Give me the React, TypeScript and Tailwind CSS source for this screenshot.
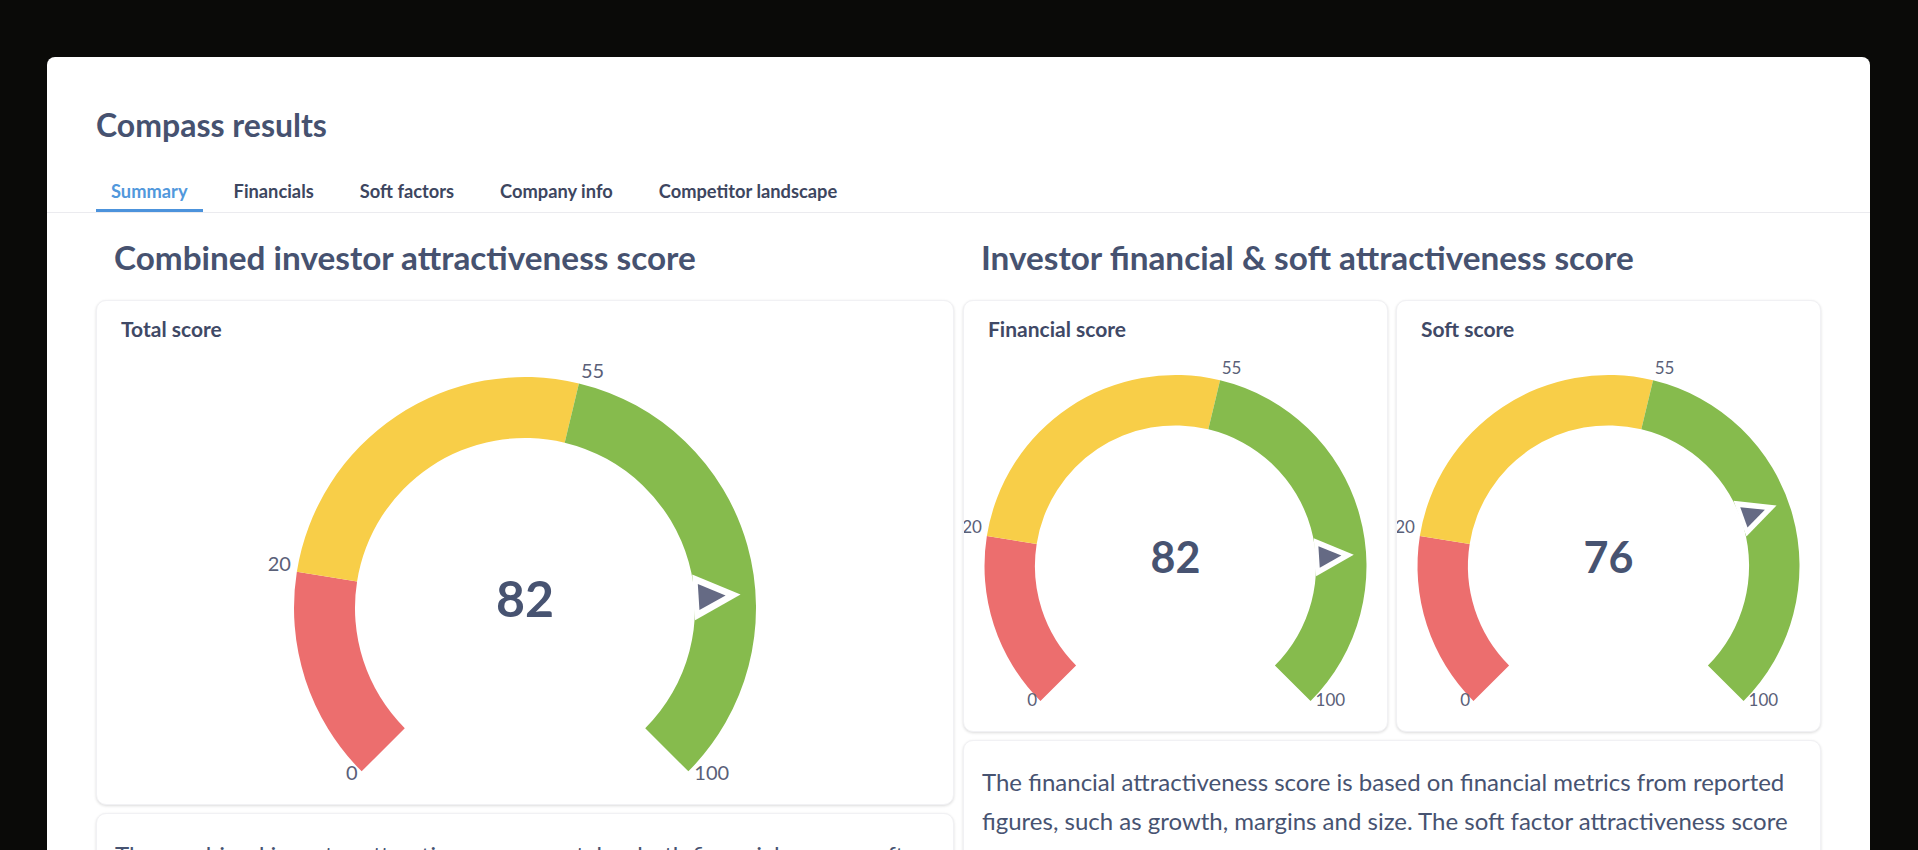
import React from "react"

const RED = "#ec6e6e"
const YELLOW = "#f8ce48"
const GREEN = "#86bb4d"

function angle(value: number) {
  return ((-135 + 2.7 * value) * Math.PI) / 180
}

function Gauge({
  value,
  R,
  width,
  height,
  cy,
  numSize,
  labelSize,
  labelLift,
}: {
  value: number
  R: number
  width: number
  height: number
  cy: number
  numSize: number
  labelSize: number
  labelLift: number
}) {
  const cx = width / 2
  const r = R * 0.736
  const s = R / 231

  const pt = (v: number, rad: number) => {
    const a = angle(v)
    return [cx + rad * Math.sin(a), cy - rad * Math.cos(a)]
  }

  const segment = (v1: number, v2: number) => {
    const [ox1, oy1] = pt(v1, R)
    const [ox2, oy2] = pt(v2, R)
    const [ix2, iy2] = pt(v2, r)
    const [ix1, iy1] = pt(v1, r)
    return `M ${ox1} ${oy1} A ${R} ${R} 0 0 1 ${ox2} ${oy2} L ${ix2} ${iy2} A ${r} ${r} 0 0 0 ${ix1} ${iy1} Z`
  }

  const tri = (base: number, tip: number, half: number) => {
    const a = angle(value)
    const ux = Math.sin(a)
    const uy = -Math.cos(a)
    const tx = Math.cos(a)
    const ty = Math.sin(a)
    const bx = cx + ux * base * s
    const by = cy + uy * base * s
    const p1 = [bx + tx * half * s, by + ty * half * s]
    const p2 = [bx - tx * half * s, by - ty * half * s]
    const p3 = [cx + ux * tip * s, cy + uy * tip * s]
    return [p1, p2, p3].map((p) => p.join(",")).join(" ")
  }

  const labels = [
    { v: 0, text: "0", anchor: "end", dx: -4, dy: 9 },
    { v: 20, text: "20", anchor: "end", dx: -6, dy: -1 },
    { v: 55, text: "55", anchor: "start", dx: 2, dy: -5 },
    { v: 100, text: "100", anchor: "start", dx: 6, dy: 9 },
  ]

  return (
    <svg width={width} height={height} className="block">
      <path d={segment(0, 20)} fill={RED} />
      <path d={segment(20, 55)} fill={YELLOW} />
      <path d={segment(55, 100)} fill={GREEN} />
      {labels.map((l) => {
        const [x, y] = pt(l.v, R)
        return (
          <text
            key={l.text}
            x={x + l.dx * s}
            y={y + l.dy * s - labelLift}
            textAnchor={l.anchor}
            fontSize={labelSize}
            fill="#5a6078"
          >
            {l.text}
          </text>
        )
      })}
      <polygon points={tri(169, 216, 23)} fill="#ffffff" />
      <polygon points={tri(174, 201, 13)} fill="#656a84" />
      <text
        x={cx}
        y={cy + 9 * s}
        textAnchor="middle"
        fontSize={numSize}
        fontWeight={700}
        fill="#475371"
      >
        {value}
      </text>
    </svg>
  )
}

function ScoreCard({
  title,
  children,
  className,
}: {
  title: string
  children: React.ReactNode
  className: string
}) {
  return (
    <div
      className={`rounded-[10px] border border-[#f1f1f4] bg-white shadow-[0_1px_3px_rgba(0,0,0,0.14)] ${className}`}
    >
      <div className="px-6 pt-4 text-[21px] leading-6 font-bold text-[#3f4966]">
        {title}
      </div>
      {children}
    </div>
  )
}

const tabs = [
  "Summary",
  "Financials",
  "Soft factors",
  "Company info",
  "Competitor landscape",
]

export default function App() {
  return (
    <div className="min-h-screen bg-[#0a0a08] pt-[57px] pl-[47px] pr-[48px] font-[family-name:Lato,sans-serif]">
      <div className="rounded-t-lg bg-white pb-10">
        <div className="border-b border-[#ebebef] px-[49px] pt-[50px]">
          <h1 className="text-[32px] leading-9 font-bold text-[#465270]">
            Compass results
          </h1>
          <div className="mt-9 flex gap-4">
            {tabs.map((tab, i) => (
              <div
                key={tab}
                className={`border-b-[3px] px-[15px] pb-[6px] text-[18.3px] leading-6 font-bold ${
                  i === 0
                    ? "border-[#4c93dc] text-[#5198dc]"
                    : "border-transparent text-[#3d4660]"
                }`}
              >
                {tab}
              </div>
            ))}
          </div>
        </div>

        <div className="grid grid-cols-2 gap-[9px] px-[49px] pt-[24px]">
          <div>
            <h2 className="mb-[23px] pl-[18px] text-[33.3px] leading-10 font-bold text-[#465270]">
              Combined investor attractiveness score
            </h2>
            <ScoreCard title="Total score" className="h-[505px]">
              <Gauge
                value={82}
                R={231}
                width={856}
                height={463}
                cy={267}
                numSize={50}
                labelSize={20}
                labelLift={0}
              />
            </ScoreCard>
            <div className="mt-2 rounded-[10px] border border-[#f1f1f4] bg-white px-[18px] pt-[21px] pb-5 text-[24px] leading-[39px] text-[#475371] shadow-[0_1px_3px_rgba(0,0,0,0.14)]">
              The combined investor attractiveness score takes both financial
              scores, soft factors and market position into account, giving a
              single view of how attractive the company is to investors.
            </div>
          </div>

          <div>
            <h2 className="mb-[23px] pl-[18px] text-[33.3px] leading-10 font-bold text-[#465270]">
              Investor financial &amp; soft attractiveness score
            </h2>
            <div className="grid grid-cols-2 gap-2">
              <ScoreCard title="Financial score" className="h-[432px]">
                <Gauge
                  value={82}
                  R={191}
                  width={423}
                  height={390}
                  cy={225}
                  numSize={43}
                  labelSize={17}
                  labelLift={2}
                />
              </ScoreCard>
              <ScoreCard title="Soft score" className="h-[432px]">
                <Gauge
                  value={76}
                  R={191}
                  width={423}
                  height={390}
                  cy={225}
                  numSize={43}
                  labelSize={17}
                  labelLift={2}
                />
              </ScoreCard>
            </div>
            <div className="mt-2 rounded-[10px] border border-[#f1f1f4] bg-white px-[18px] pt-[21px] pb-5 text-[24px] leading-[39px] text-[#475371] shadow-[0_1px_3px_rgba(0,0,0,0.14)]">
              The financial attractiveness score is based on financial metrics
              from reported figures, such as growth, margins and size. The soft
              factor attractiveness score reflects qualitative factors such as
              team, product and market position.
            </div>
          </div>
        </div>
      </div>
    </div>
  )
}
